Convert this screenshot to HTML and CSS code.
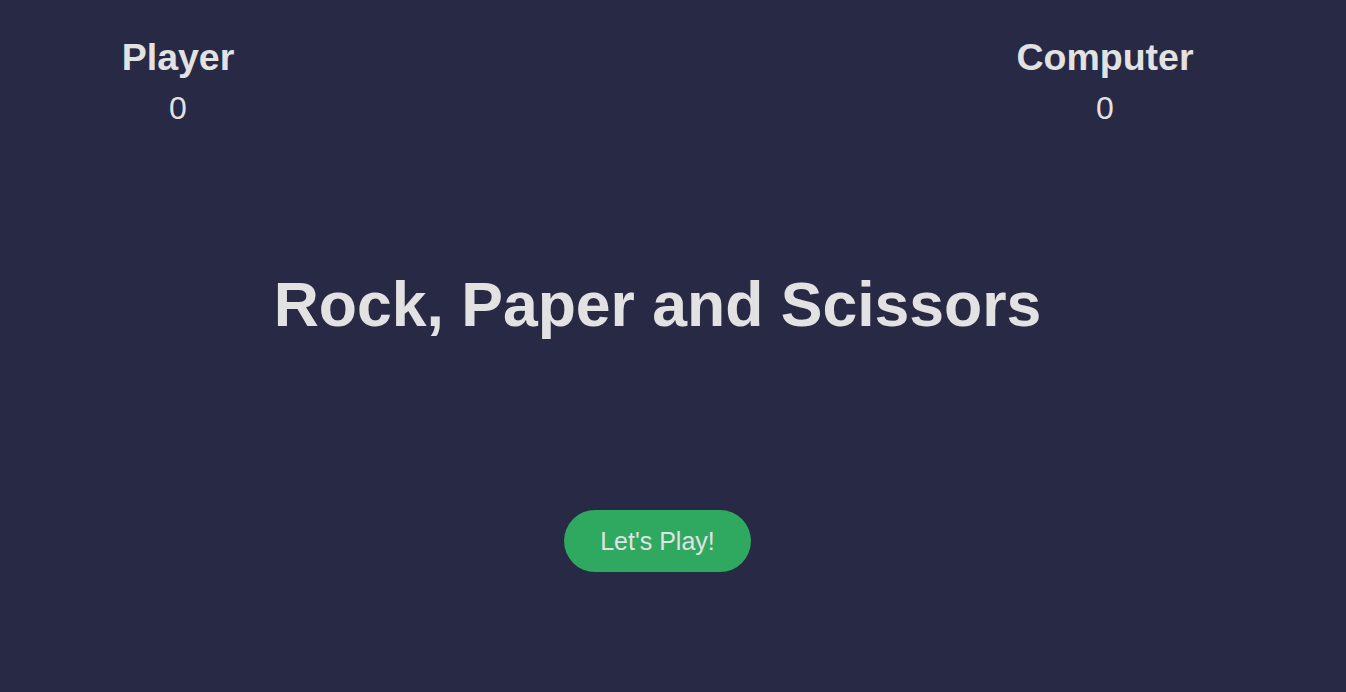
FILE: index.html
```html
<!DOCTYPE html>
<html lang="en">
<head>
<meta charset="utf-8">
<title>Rock, Paper and Scissors</title>
<link rel="stylesheet" href="styles.css">
</head>
<body>
<header class="scoreboard">
  <div class="score">
    <h2 class="score-label">Player</h2>
    <p class="score-value">0</p>
  </div>
  <div class="score">
    <h2 class="score-label">Computer</h2>
    <p class="score-value">0</p>
  </div>
</header>
<main class="game">
  <h1 class="title">Rock, Paper and Scissors</h1>
  <button class="play-btn" type="button">Let's Play!</button>
</main>
</body>
</html>
```
FILE: styles.css
```css
html, body {
  margin: 0;
  padding: 0;
}
body {
  background: #282945;
  color: #e2e2e2;
  font-family: "Liberation Sans", Arial, sans-serif;
  height: 692px;
  overflow: hidden;
}
.scoreboard {
  display: flex;
  justify-content: space-between;
  padding: 36px 141px 0 78px;
}
.score {
  width: 200px;
  text-align: center;
}
.score-label {
  margin: 0;
  font-size: 37.5px;
  font-weight: bold;
}
.score-value {
  margin: 11px 0 0;
  font-size: 32px;
}
.game {
  display: flex;
  flex-direction: column;
  align-items: center;
  width: 1315px;
}
.title {
  margin: 141px 0 0;
  font-size: 62.5px;
  font-weight: bold;
}
.play-btn {
  margin-top: 170px;
  height: 62px;
  padding: 0 36px;
  border: none;
  border-radius: 31px;
  background: #2ea95f;
  color: #e2e2e2;
  font-family: "Liberation Sans", Arial, sans-serif;
  font-size: 25px;
  cursor: pointer;
}
```
